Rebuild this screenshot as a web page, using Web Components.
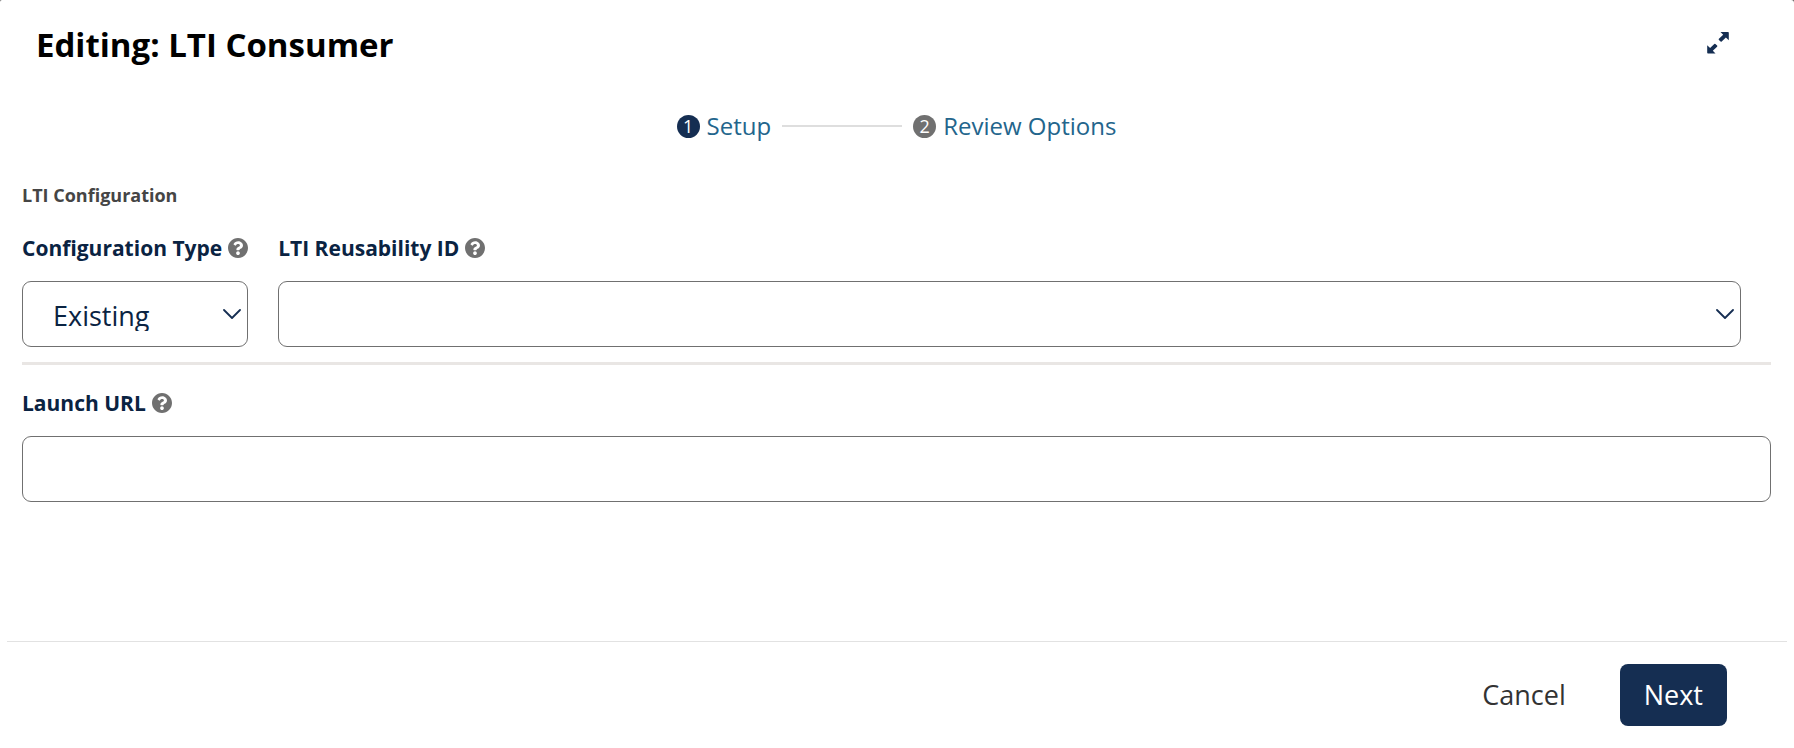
<!DOCTYPE html>
<html lang="en">
<head>
<meta charset="utf-8">
<title>Editing: LTI Consumer</title>
<style>
    body {
        margin: 0;
        background: #666;
        color: #0a2342;
        font-family: "Open Sans", sans-serif;
        --primary: #152e52;
        --border: #707070;
        --muted: #707070;
    }
</style>
</head>
<body>

<editor-modal heading="Editing: LTI Consumer">
    <step-list slot="steps">
        <step-item number="1" name="Setup" active></step-item>
        <step-item number="2" name="Review Options"></step-item>
    </step-list>
    <config-section heading="LTI Configuration">
        <select-field label="Configuration Type" value="Existing"></select-field>
        <select-field class="wide" label="LTI Reusability ID" value=""></select-field>
    </config-section>
    <text-field label="Launch URL"></text-field>
    <modal-button slot="actions" kind="plain">Cancel</modal-button>
    <modal-button slot="actions" kind="primary">Next</modal-button>
</editor-modal>

<script>
//MODAL FRAME
class EditorModal extends HTMLElement {
    constructor(){
        super()
        this.attachShadow({mode: "open"})

        const style = `
        <style>
            :host {
                display: flex;
                flex-direction: column;
                min-height: 100vh;
                background: white;
                border-radius: 2px 3px 0 0;
            }
            header {
                display: flex;
                justify-content: space-between;
                align-items: flex-start;
                padding: 23px 64px 0 36px;
            }
            h1 {
                margin: 0;
                color: black;
                font-size: 33px;
                line-height: 44px;
            }
            .expand {
                display: flex;
                padding: 7px 0;
                border: 0;
                background: none;
                color: var(--primary);
            }
            main {
                flex: 1;
                padding: 42px 23px 24px 22px;
            }
            footer {
                display: flex;
                justify-content: flex-end;
                gap: 30px;
                margin: 0 7px;
                padding: 22px 60px;
                border-top: 1px solid #e2e2e2;
            }
        </style>
        `
        this.shadowRoot.innerHTML = `
        ${style}
        <header>
            <h1>${this.getAttribute("heading")}</h1>
            <button class="expand" type="button" aria-label="Toggle fullscreen">
                <svg width="24" height="24" viewBox="0 0 24 24" fill="currentColor">
                    <path d="M14.500 2H22a.8.8 0 0 1 .8.8V10.300L19.900 7.400 15.700 11.600a.8.8 0 0 1-1.100 0L12.900 9.900a.8.8 0 0 1 0-1.100L17.200 4.700z"/>
                    <path d="M9.500 23.500H2a.8.8 0 0 1-.8-.8V15.200L4.100 18.100 8.300 13.900a.8.8 0 0 1 1.100 0L11.100 15.600a.8.8 0 0 1 0 1.100L6.800 20.800z"/>
                </svg>
            </button>
        </header>
        <main>
            <slot name="steps"></slot>
            <slot></slot>
        </main>
        <footer><slot name="actions"></slot></footer>
        `
    }
}

//STEPPER
class StepList extends HTMLElement {
    constructor(){
        super()
        this.attachShadow({mode: "open"})
        this.shadowRoot.innerHTML = `
        <style>
            :host {
                display: flex;
                justify-content: center;
                margin-bottom: 40px;
            }
        </style>
        <slot></slot>
        `
    }
}

class StepItem extends HTMLElement {
    constructor(){
        super()
        this.attachShadow({mode: "open"})

        const style = `
        <style>
            :host {
                display: flex;
                align-items: center;
            }
            /* line between two steps */
            :host(:not(:first-child))::before {
                content: "";
                width: 120px;
                height: 2px;
                margin: 0 11px;
                background: #dedede;
            }
            button {
                display: flex;
                align-items: center;
                gap: 7px;
                padding: 0;
                border: 0;
                background: none;
                color: #23658c;
                font: 24px/34px "Open Sans", sans-serif;
            }
            .number {
                width: 23px;
                height: 23px;
                border-radius: 50%;
                background: var(--muted);
                color: white;
                font-size: 18px;
                line-height: 23px;
                text-align: center;
            }
            :host([active]) .number {
                background: var(--primary);
            }
        </style>
        `
        this.shadowRoot.innerHTML = `
        ${style}
        <button type="button">
            <span class="number">${this.getAttribute("number")}</span>
            <span>${this.getAttribute("name")}</span>
        </button>
        `
    }
}

//GROUP OF FIELDS
class ConfigSection extends HTMLElement {
    constructor(){
        super()
        this.attachShadow({mode: "open"})

        const style = `
        <style>
            :host {
                display: block;
                margin-bottom: 23px;
                border-bottom: 3px solid #e9e6e4;
            }
            h2 {
                margin: 0 0 26px;
                color: #454545;
                font-size: 18px;
                line-height: 24px;
            }
            .row {
                display: flex;
                gap: 30px;
                padding: 0 30px 15px 0;
            }
            ::slotted(.wide) {
                flex: 1;
            }
        </style>
        `
        this.shadowRoot.innerHTML = `
        ${style}
        <h2>${this.getAttribute("heading")}</h2>
        <div class="row"><slot></slot></div>
        `
    }
}

//HELP ICON
class HelpIcon extends HTMLElement {
    constructor(){
        super()
        this.attachShadow({mode: "open"})
        this.shadowRoot.innerHTML = `
        <style>
            :host {
                display: block;
                color: var(--muted);
            }
            svg {
                display: block;
            }
        </style>
        <svg width="20" height="20" viewBox="8 8 496 496" aria-hidden="true">
            <path fill="currentColor" d="M504 256c0 136.997-111.043 248-248 248S8 392.997 8 256C8 119.083 119.043 8 256 8s248 111.083 248 248zM262.655 90c-54.497 0-89.255 22.957-116.549 63.758-3.536 5.286-2.353 12.415 2.715 16.258l34.699 26.310c5.205 3.947 12.621 3.008 16.665-2.122 17.864-22.658 30.113-35.797 57.303-35.797 20.429 0 45.698 13.148 45.698 32.958 0 14.976-12.363 22.667-32.534 33.976C247.128 238.528 216 254.941 216 296v4c0 6.627 5.373 12 12 12h56c6.627 0 12-5.373 12-12v-1.333c0-28.462 83.186-29.647 83.186-106.667 0-58.002-60.165-102-116.531-102zM256 338c-25.365 0-46 20.635-46 46 0 25.364 20.635 46 46 46s46-20.636 46-46c0-25.365-20.635-46-46-46z"/>
        </svg>
        `
    }
}

const fieldStyle = `
    :host {
        display: block;
    }
    .top {
        display: flex;
        align-items: flex-start;
        gap: 6px;
        margin-bottom: 18px;
    }
    help-icon {
        padding-top: 5px;
    }
    label {
        font-size: 21px;
        font-weight: bold;
        line-height: 30px;
        white-space: nowrap;
    }
    select, input {
        box-sizing: border-box;
        display: block;
        width: 100%;
        height: 66px;
        margin: 0;
        border: 1px solid var(--border);
        border-radius: 9px;
        background: white;
        color: inherit;
        font: 27px "Open Sans", sans-serif;
    }
`

//DROP-DOWN FIELD
class SelectField extends HTMLElement {
    constructor(){
        super()
        this.attachShadow({mode: "open"})

        const value = this.getAttribute("value")
        this.shadowRoot.innerHTML = `
        <style>
            ${fieldStyle}
            .control {
                display: grid;
                align-items: center;
            }
            .control > * {
                grid-area: 1 / 1;
            }
            select {
                appearance: none;
                padding: 15px 30px;
            }
            svg {
                justify-self: end;
                margin-right: 7px;
                pointer-events: none;
            }
        </style>
        <div class="top">
            <label for="field">${this.getAttribute("label")}</label>
            <help-icon></help-icon>
        </div>
        <div class="control">
            <select id="field"><option>${value}</option></select>
            <svg width="18" height="10" viewBox="0 0 18 10" fill="none" stroke="#152e52" stroke-width="1.800" stroke-linecap="round" stroke-linejoin="round">
                <path d="M1 1l8 8 8-8"/>
            </svg>
        </div>
        `
    }
}

//TEXT FIELD
class TextField extends HTMLElement {
    constructor(){
        super()
        this.attachShadow({mode: "open"})
        this.shadowRoot.innerHTML = `
        <style>
            ${fieldStyle}
            input {
                padding: 15px 30px;
            }
        </style>
        <div class="top">
            <label for="field">${this.getAttribute("label")}</label>
            <help-icon></help-icon>
        </div>
        <input id="field" type="text">
        `
    }
}

//FOOTER BUTTON
class ModalButton extends HTMLElement {
    constructor(){
        super()
        this.attachShadow({mode: "open"})
        this.shadowRoot.innerHTML = `
        <style>
            :host {
                display: block;
            }
            button {
                padding: 12px 24px;
                border: 0;
                border-radius: 8px;
                background: none;
                color: #333;
                font: 27px/38px "Open Sans", sans-serif;
            }
            :host([kind="primary"]) button {
                background: var(--primary);
                color: white;
            }
        </style>
        <button type="button"><slot></slot></button>
        `
    }
}

customElements.define("help-icon", HelpIcon)
customElements.define("step-item", StepItem)
customElements.define("step-list", StepList)
customElements.define("select-field", SelectField)
customElements.define("text-field", TextField)
customElements.define("config-section", ConfigSection)
customElements.define("modal-button", ModalButton)
customElements.define("editor-modal", EditorModal)
</script>
</body>
</html>
